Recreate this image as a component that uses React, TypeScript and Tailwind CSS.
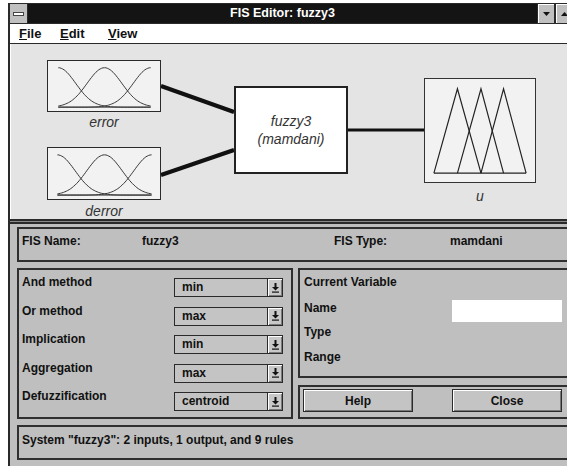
import React from 'react';

// gaussian membership curve inside the small input boxes (box space 113x52)
function gaussPath(center: number, sigma: number) {
  const pts: string[] = [];
  for (let x = 9; x <= 105; x += 1.5) {
    const v = Math.exp(-((x - center) ** 2) / (2 * sigma * sigma));
    pts.push(`${x.toFixed(1)},${(48 - v * 41).toFixed(1)}`);
  }
  return 'M' + pts.join(' L');
}

function InputMF() {
  return (
    <svg width="100%" height="100%" viewBox="0 0 113 52" className="block">
      <line x1="9" y1="48" x2="105" y2="48" stroke="#333" strokeWidth="1" />
      {[9, 57, 105].map((c) => (
        <path key={c} d={gaussPath(c, 18)} fill="none" stroke="#333" strokeWidth="1" />
      ))}
    </svg>
  );
}

function OutputMF() {
  const tris = [
    [9, 33, 57],
    [33, 57, 80],
    [57, 80, 103],
  ];
  return (
    <svg width="100%" height="100%" viewBox="0 0 112 105" className="block">
      <line x1="9" y1="96" x2="103" y2="96" stroke="#222" strokeWidth="1.2" />
      {tris.map(([a, b, c]) => (
        <polyline key={b} points={`${a},96 ${b},10 ${c},96`} fill="none" stroke="#222" strokeWidth="1.2" />
      ))}
    </svg>
  );
}

function Dropdown({ value }: { value: string }) {
  return (
    <div className="w-[109px] h-[19px] border border-[#2a2a2a] bg-[#c4c4c4] flex">
      <div className="flex-1 pl-[7px] text-[12px] font-bold leading-[17px] text-[#111]">{value}</div>
      <div className="w-[15px] border-l border-[#2a2a2a] bg-[#c8c8c8] shadow-[inset_1px_1px_0_#fff,inset_-1px_-1px_0_#7a7a7a] flex items-center justify-center">
        <svg width="7" height="10" viewBox="0 0 7 10">
          <rect x="2.5" y="0" width="2" height="4" fill="#111" />
          <polygon points="0,4 7,4 3.5,7.5" fill="#111" />
          <rect x="0" y="8.5" width="7" height="1.2" fill="#111" />
        </svg>
      </div>
    </div>
  );
}

const rows = [
  ['And method', 'min'],
  ['Or method', 'max'],
  ['Implication', 'min'],
  ['Aggregation', 'max'],
  ['Defuzzification', 'centroid'],
];

export default function App() {
  return (
    <div className="w-[567px] h-[466px] overflow-hidden bg-white pl-[8px] pt-[3px] font-['Liberation_Sans',Arial,sans-serif] text-[#111]">
      <div className="w-[580px] h-[470px] border-l-2 border-t border-[#2a2a2a] bg-[#bfbfbf] flex flex-col">
        {/* title bar */}
        <div className="h-[20px] shrink-0 flex border-b border-[#2a2a2a]">
          <div className="w-[18px] bg-[#c0c0c0] border-r border-[#2a2a2a] flex items-center justify-center">
            <div className="w-[11px] h-[4px] bg-white border border-[#444]" />
          </div>
          <div className="w-[509px] bg-[#141414] text-white text-[12.5px] font-bold flex items-center justify-center">
            FIS Editor: fuzzy3
          </div>
          <div className="w-[18px] bg-[#c0c0c0] border-x border-[#2a2a2a] shadow-[inset_1px_1px_0_#fff] flex items-center justify-center">
            <svg width="7" height="4" viewBox="0 0 7 4">
              <polygon points="0,0 7,0 3.5,4" fill="#111" />
            </svg>
          </div>
          <div className="w-[18px] bg-[#c0c0c0] border-l border-[#2a2a2a] shadow-[inset_1px_1px_0_#fff] flex items-center justify-center">
            <svg width="7" height="4" viewBox="0 0 7 4">
              <polygon points="0,4 7,4 3.5,0" fill="#111" />
            </svg>
          </div>
        </div>

        {/* menu bar */}
        <div className="h-[20px] shrink-0 bg-white border-b border-[#2a2a2a] flex items-center pl-[9px] text-[13px] font-bold">
          <span className="w-[41px]"><span className="underline">F</span>ile</span>
          <span className="w-[48px]"><span className="underline">E</span>dit</span>
          <span><span className="underline">V</span>iew</span>
        </div>

        {/* diagram */}
        <div className="relative h-[175px] shrink-0 bg-[#e4e4e4] border-l border-white">
          <svg className="absolute inset-0" width="557" height="175">
            <line x1="150" y1="42" x2="223" y2="68" stroke="#111" strokeWidth="4" />
            <line x1="150" y1="131" x2="223" y2="106" stroke="#111" strokeWidth="4" />
            <line x1="337" y1="86" x2="413" y2="86" stroke="#111" strokeWidth="3" />
          </svg>

          <div className="absolute left-[36px] top-[16px] w-[114px] h-[52px] bg-[#f2f2f2] border-[1.5px] border-[#2a2a2a]">
            <InputMF />
          </div>
          <div className="absolute left-[36px] top-[70px] w-[114px] text-center italic text-[14px] leading-[16px] text-[#333]">error</div>

          <div className="absolute left-[36px] top-[103px] w-[114px] h-[53px] bg-[#f2f2f2] border-[1.5px] border-[#2a2a2a]">
            <InputMF />
          </div>
          <div className="absolute left-[36px] top-[159px] w-[114px] text-center italic text-[14px] leading-[16px] text-[#333]">derror</div>

          <div className="absolute left-[223px] top-[42px] w-[114px] h-[88px] bg-white border-2 border-[#222] flex flex-col items-center justify-center italic text-[14px] leading-[18px] text-[#333]">
            <span>fuzzy3</span>
            <span>(mamdani)</span>
          </div>

          <div className="absolute left-[413px] top-[34px] w-[112px] h-[105px] bg-[#f2f2f2] border-[1.5px] border-[#333]">
            <OutputMF />
          </div>
          <div className="absolute left-[413px] top-[144px] w-[112px] text-center italic text-[14px] leading-[16px] text-[#333]">u</div>
        </div>

        {/* separator */}
        <div className="h-[5px] shrink-0 bg-[#8a8a8a] border-y-2 border-[#2a2a2a]" />

        {/* lower panel */}
        <div className="flex-1 pl-[7px] pt-[3px] flex flex-col gap-[6px] text-[12px] font-bold leading-[14px]">
          <div className="h-[35px] border-2 border-[#2f2f2f] flex pl-[3px] pt-[5px]">
            <span className="w-[120px]">FIS Name:</span>
            <span className="w-[192px]">fuzzy3</span>
            <span className="w-[116px]">FIS Type:</span>
            <span>mamdani</span>
          </div>

          <div className="h-[151px] flex gap-[5px]">
            <div className="w-[276px] border-2 border-[#2f2f2f] pt-[4px] pl-[3px] flex flex-col">
              {rows.map(([label, value]) => (
                <div key={label} className="h-[29px] flex">
                  <span className="w-[152px] pt-[1px]">{label}</span>
                  <div className="pt-[4px]">
                    <Dropdown value={value} />
                  </div>
                </div>
              ))}
            </div>

            <div className="w-[280px] flex flex-col gap-[7px]">
              <div className="h-[110px] border-2 border-[#2f2f2f] pl-[4px] pt-[5px] flex flex-col">
                <div className="h-[25px]">Current Variable</div>
                <div className="h-[25px] flex">
                  <span className="w-[148px] pt-[1px]">Name</span>
                  <div className="w-[110px] h-[22px] bg-white" />
                </div>
                <div className="h-[25px]">Type</div>
                <div className="h-[25px]">Range</div>
              </div>
              <div className="h-[34px] border-2 border-[#2f2f2f] pl-[3px] pt-[2px] flex gap-[39px]">
                <button className="w-[110px] h-[23px] border border-[#2a2a2a] bg-[#c4c4c4] shadow-[inset_1px_1px_0_#fff,inset_-1px_-1px_0_#777] text-[12px] font-bold">
                  Help
                </button>
                <button className="w-[110px] h-[23px] border border-[#2a2a2a] bg-[#c4c4c4] shadow-[inset_1px_1px_0_#fff,inset_-1px_-1px_0_#777] text-[12px] font-bold">
                  Close
                </button>
              </div>
            </div>
          </div>

          <div className="h-[35px] border-2 border-[#2f2f2f] pl-[3px] pt-[6px]">
            System "fuzzy3": 2 inputs, 1 output, and 9 rules
          </div>
        </div>
      </div>
    </div>
  );
}
